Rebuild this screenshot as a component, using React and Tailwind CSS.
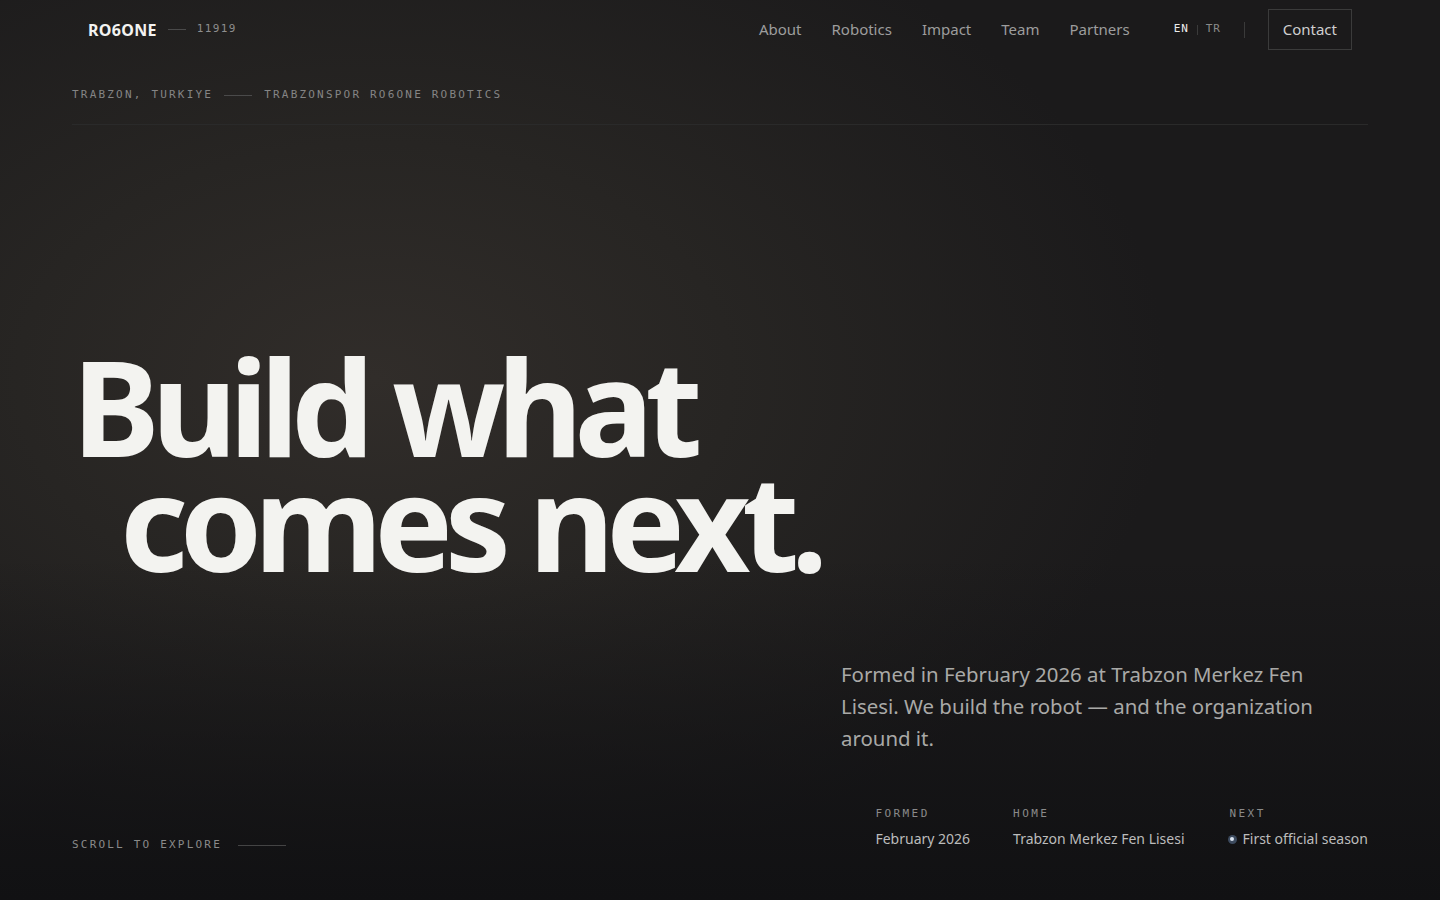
import React from "react";

const sans = "font-['Noto_Sans',sans-serif]";
const mono = "font-['DejaVu_Sans_Mono',monospace]";

export default function App() {
  return (
    <div className={`${sans} h-[900px] w-full overflow-hidden flex flex-col bg-[#1b1a1b] bg-[linear-gradient(to_bottom,rgba(17,17,19,0)_62%,#111113_100%),radial-gradient(ellipse_55%_58%_at_26%_42%,#312d2a_0%,#272523_45%,#1b1a1b_100%)]`}>
      {/* Header */}
      <header className="h-[59px] shrink-0 px-[88px] flex items-center justify-between">
        <div className="flex items-center">
          <span className="text-[16px] font-bold tracking-[0.02em] text-[#f3f3f1]">RO6ONE</span>
          <span className="ml-[11px] w-[18px] h-px bg-[#4a4a4a]" />
          <span className={`${mono} ml-[11px] text-[11px] tracking-[0.12em] text-[#8e8e8e]`}>11919</span>
        </div>
        <div className="flex items-center">
          <nav className="flex items-center gap-[30px] text-[15px] text-[#9d9d9d]">
            <a>About</a>
            <a>Robotics</a>
            <a>Impact</a>
            <a>Team</a>
            <a>Partners</a>
          </nav>
          <div className={`${mono} ml-[44px] flex items-center text-[11px] tracking-[0.08em]`}>
            <span className="text-[#ececec]">EN</span>
            <span className="mx-[8px] h-[10px] w-px bg-[#3a3a3a]" />
            <span className="text-[#8a8a8a]">TR</span>
          </div>
          <span className="mx-[23px] h-[16px] w-px bg-[#3a3a3a]" />
          <button className="h-[41px] px-[14px] border border-[#3b3b3b] text-[15px] text-[#cfcfcf]">Contact</button>
        </div>
      </header>

      <main className="flex-1 px-[72px] flex flex-col">
        <div className={`${mono} pt-[28px] pb-[21px] border-b border-[#2a2a2a] flex items-center text-[11px] leading-[16px] tracking-[0.2em] text-[#858585]`}>
          <span>TRABZON, TURKIYE</span>
          <span className="ml-[11px] mr-[12px] w-[28px] h-px bg-[#4a4a4a]" />
          <span>TRABZONSPOR RO6ONE ROBOTICS</span>
        </div>

        <h1 className="mt-[224px] text-[132px] leading-[115px] font-bold tracking-[-0.063em] text-[#f3f3f0]">
          <span className="block">Build what</span>
          <span className="block pl-[48px]">comes next.</span>
        </h1>

        <p className="mt-[79px] ml-[769px] w-[490px] text-[20.4px] leading-[32px] text-[#a9a9a7]">
          Formed in February 2026 at Trabzon Merkez Fen Lisesi. We build the robot — and the organization around it.
        </p>

        <div className="mt-[52px] flex justify-between items-start">
          <div className={`${mono} mt-[31px] flex items-center text-[11px] leading-[16px] tracking-[0.2em] text-[#8a8a8a]`}>
            <span>SCROLL TO EXPLORE</span>
            <span className="ml-[16px] w-[48px] h-px bg-[#444]" />
          </div>
          <div className="flex gap-[43px]">
            <div className="flex flex-col">
              <span className={`${mono} text-[11px] leading-[16px] tracking-[0.22em] text-[#8a8a8a]`}>FORMED</span>
              <span className="mt-[6px] text-[14px] leading-[22px] text-[#bcbcbc]">February 2026</span>
            </div>
            <div className="flex flex-col">
              <span className={`${mono} text-[11px] leading-[16px] tracking-[0.22em] text-[#8a8a8a]`}>HOME</span>
              <span className="mt-[6px] text-[14px] leading-[22px] text-[#bcbcbc]">Trabzon Merkez Fen Lisesi</span>
            </div>
            <div className="flex flex-col">
              <span className={`${mono} pl-[2px] text-[11px] leading-[16px] tracking-[0.22em] text-[#8a8a8a]`}>NEXT</span>
              <span className="mt-[6px] flex items-center text-[14px] leading-[22px] text-[#bcbcbc]">
                <span className="mr-[6px] w-[9px] h-[9px] rounded-full bg-[#3c4a5e] flex items-center justify-center">
                  <span className="w-[4px] h-[4px] rounded-full bg-[#dbe4f0]" />
                </span>
                First official season
              </span>
            </div>
          </div>
        </div>
      </main>
    </div>
  );
}
